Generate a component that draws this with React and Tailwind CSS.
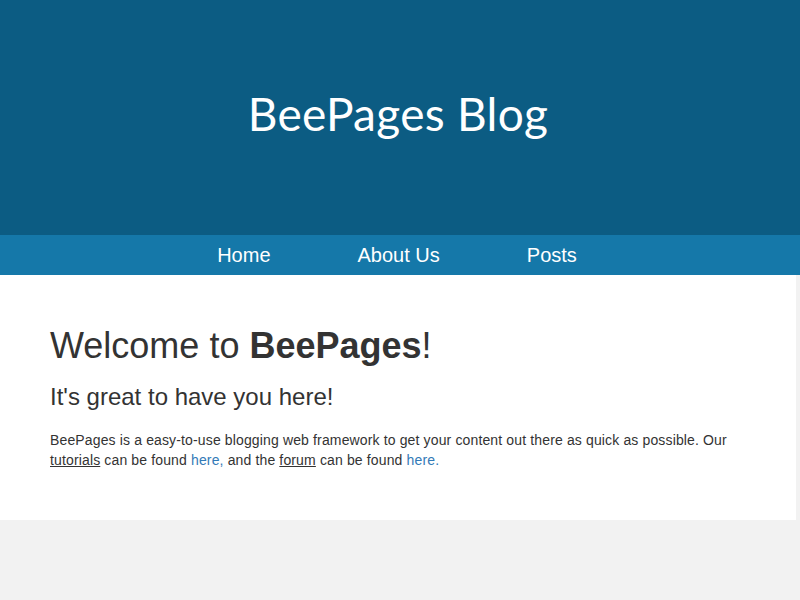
import React from 'react';

const navItems = ['Home', 'About Us', 'Posts'];

const App = () => {
    return (
        <div className="min-h-[600px] bg-[#f2f2f2] font-['Liberation_Sans',Arial,sans-serif]">
            <header className="h-[235px] bg-[#0c5c83] flex items-center justify-center pr-1">
                <h1 className="text-white text-[46px] font-normal font-['Lato','Open_Sans',sans-serif] tracking-[0.3px] -mt-2">
                    BeePages Blog
                </h1>
            </header>

            <nav className="h-10 bg-[#1578a9] flex items-center justify-center gap-[87px] pr-[6px]">
                {navItems.map(item => (
                    <a key={item} href="#" className="text-white text-[20px] leading-10">
                        {item}
                    </a>
                ))}
            </nav>

            <main className="w-[796px] bg-white px-[50px] pt-[51px] pb-10 text-[#333]">
                <h2 className="text-[36px] leading-[1.1]">
                    Welcome to <b>BeePages</b>!
                </h2>
                <h3 className="text-[24px] leading-[1.1] mt-[18px]">It's great to have you here!</h3>
                <p className="text-[14px] leading-5 mt-5 mb-[10px] tracking-[0.14px]">
                    BeePages is a easy-to-use blogging web framework to get your content out there as quick as possible. Our{' '}
                    <u>tutorials</u> can be found <a href="#" className="text-[#337ab7]">here,</a> and the <u>forum</u> can be found{' '}
                    <a href="#" className="text-[#337ab7]">here.</a>
                </p>
            </main>
        </div>
    );
};

export default App;
